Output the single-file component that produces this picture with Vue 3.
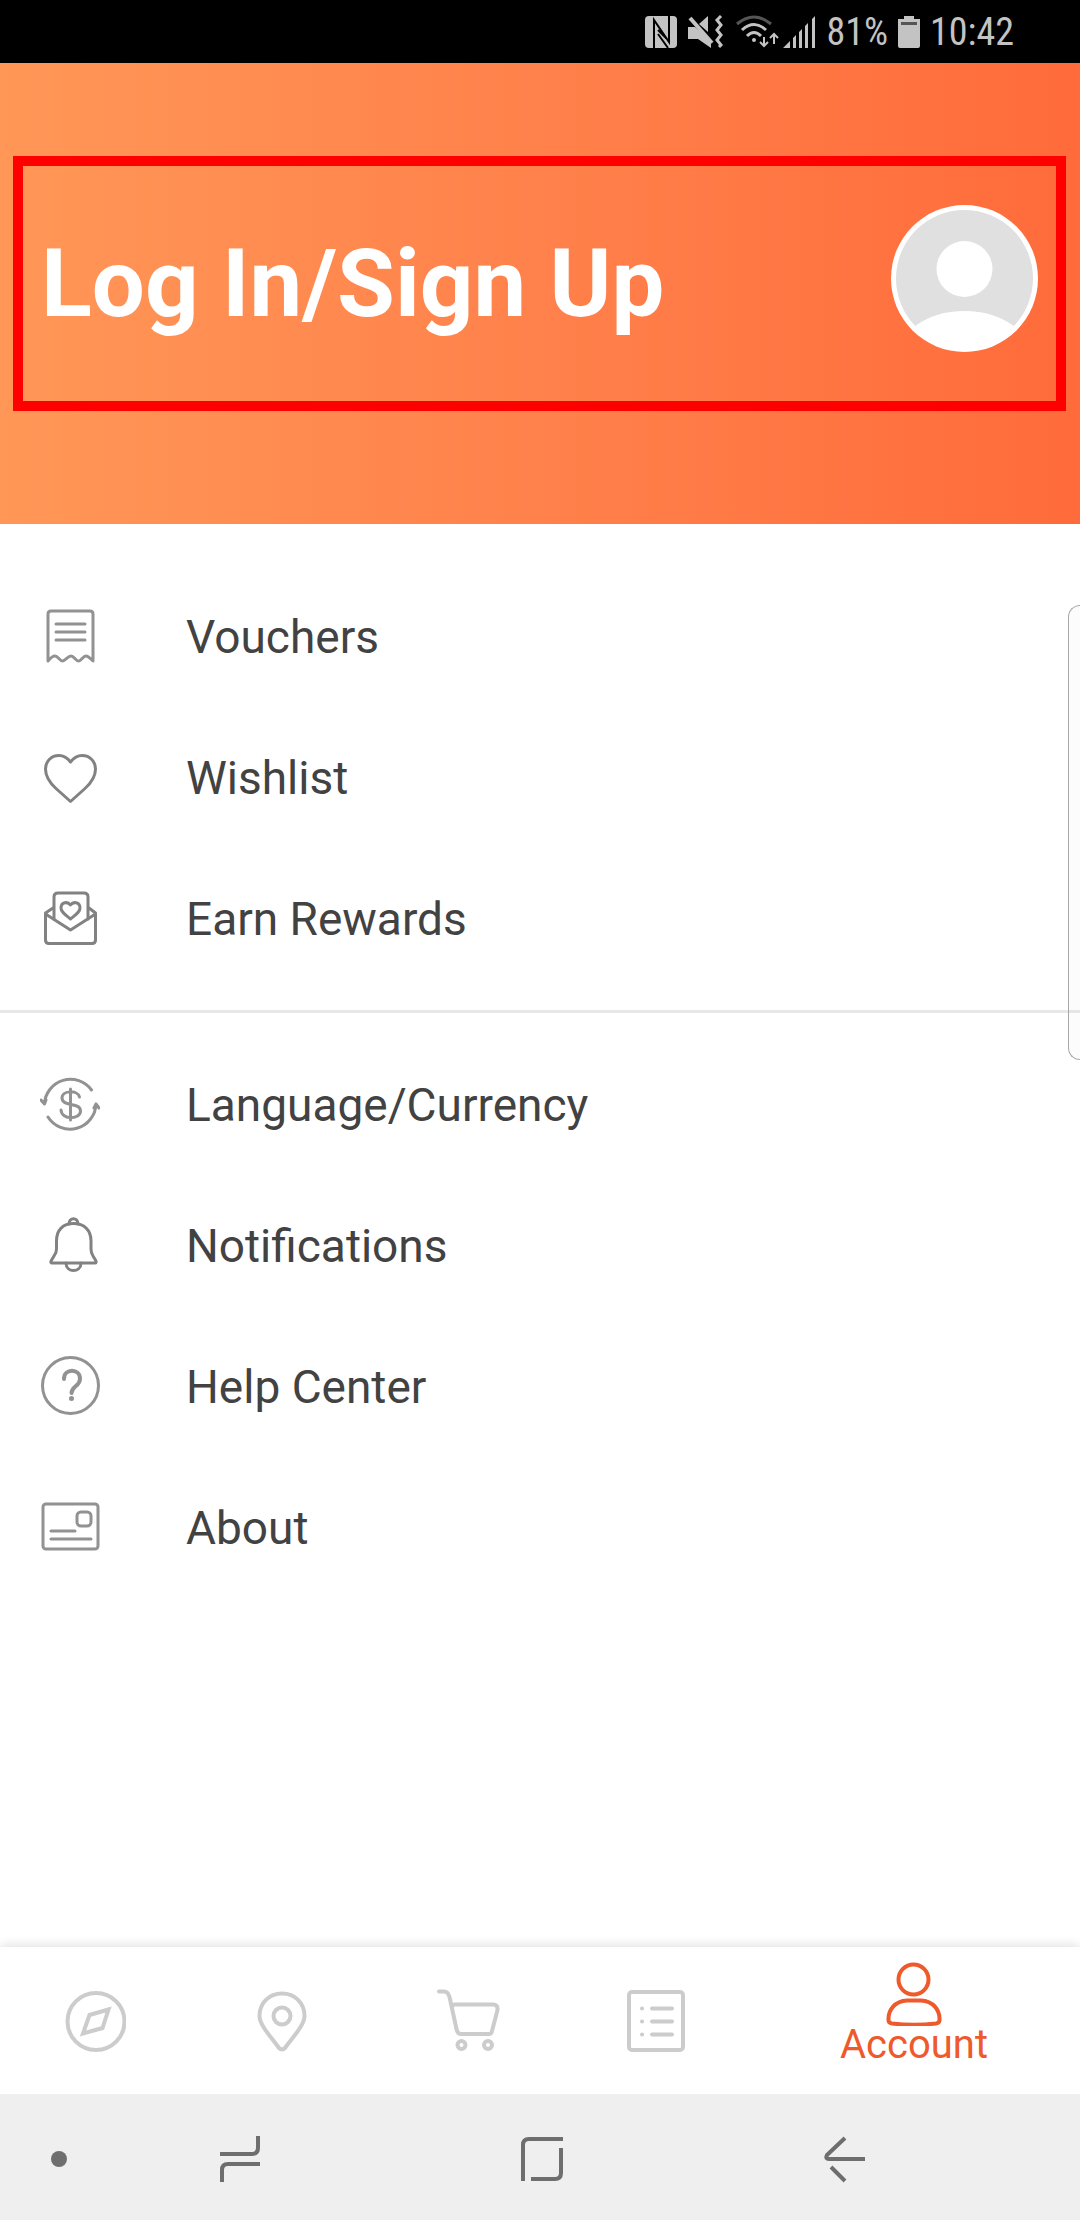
<script setup>
const groups = [
  [
    { icon: 'voucher', label: 'Vouchers' },
    { icon: 'heart', label: 'Wishlist' },
    { icon: 'rewards', label: 'Earn Rewards' },
  ],
  [
    { icon: 'currency', label: 'Language/Currency' },
    { icon: 'bell', label: 'Notifications' },
    { icon: 'help', label: 'Help Center' },
    { icon: 'about', label: 'About' },
  ],
]
</script>

<template>
  <div class="screen">
    <div class="status">
      <svg class="status-icons" width="172" height="34" viewBox="0 0 172 34" aria-hidden="true">
        <rect y="1" width="32" height="32" rx="4" fill="#c3c3c3" />
        <path stroke="#000" stroke-width="2" fill="none" d="M9 34V5L24 27V0M13 15L22 24M13 19L23 33" />
        <path fill="#c3c3c3" d="M43 12H50L66 26V33L53 24H43ZM54 9L63 1V17Z" />
        <path stroke="#c3c3c3" stroke-width="4" fill="none" d="M45 3L67 28" />
        <path stroke="#c3c3c3" stroke-width="3" fill="none" d="M76 1L72 5L76 10L72 15L76 20L72 25L76 30L74 32" />
        <g fill="none" stroke="#c3c3c3" stroke-width="3">
          <path stroke="#555" d="M92 9Q109 -5 126 9" />
          <path d="M97 15Q109 4 121 15M102 21Q109 14 116 21" />
          <path stroke-width="2" d="M119 22V31M115 27L119 31L123 27M129 29V19M125 23L129 19L133 23" />
        </g>
        <circle cx="109" cy="25" r="2" fill="#c3c3c3" />
        <path fill="#c3c3c3" d="M138 33L145 26V33ZM148 23L151 20V33H148ZM154 17L157 14V33H154ZM160 11L163 8V33H160ZM167 4L170 1V33H167Z" />
      </svg>
      <span>81%</span>
      <svg width="22" height="34" viewBox="0 0 22 34" aria-hidden="true">
        <path fill="#c3c3c3" d="M6 1H16V4H22V31Q22 33 20 33H2Q0 33 0 31V4H6Z" />
        <path fill="#555" d="M3 7H19V10H3Z" />
      </svg>
      <span>10:42</span>
    </div>

    <header class="hero">
      <a class="login" href="#login">
        <span class="login-title">Log In/Sign Up</span>
        <svg class="avatar" width="147" height="147" viewBox="0 0 147 147" aria-hidden="true">
          <circle cx="73.5" cy="73.5" r="73.5" fill="#fff" />
          <circle cx="73.5" cy="73.5" r="68.5" fill="#e0e0e0" />
          <circle cx="73.5" cy="64" r="28" fill="#fff" />
          <path fill="#fff" d="M24 121Q45 106 73.5 106T123 121Q103 144 73.5 144T24 121Z" />
        </svg>
      </a>
    </header>

    <main class="content">
      <ul v-for="(group, i) in groups" :key="i" class="group">
        <li v-for="item in group" :key="item.icon">
          <a class="row" :href="'#' + item.icon">
            <svg class="row-icon" width="60" height="60" viewBox="0 0 60 60" aria-hidden="true">
              <g v-if="item.icon === 'voucher'">
                <path d="M8 55V8Q8 5 11 5H50Q53 5 53 8V55Q48 50 46 50C43 50 41 55 38.5 55S34 50 31 50S25 55 22.5 55S18 50 15 50Q12 50 8 55Z" />
                <path d="M16 18H45M16 26H45M16 34H45" />
              </g>
              <g v-else-if="item.icon === 'heart'" class="dark">
                <path d="M30.500 15C27 10.500 23.500 8.500 19 8.500C11 8.500 5.500 14.500 5.500 22C5.500 30 10 36 16 41.500L30.500 54.500L45 41.500C51 36 55.500 30 55.500 22C55.500 14.500 50 8.500 42 8.500C37.500 8.500 34 10.500 30.500 15Z" />
              </g>
              <g v-else-if="item.icon === 'rewards'" class="dark">
                <path d="M14 31V9Q14 5 18 5H44Q48 5 48 9V31" />
                <path d="M13 20L5.500 25V52Q5.500 55.500 9 55.500H52Q55.500 55.500 55.500 52V25L49 20M5.500 26L30.500 42L55.500 26" />
                <path d="M30.500 17C28 13.500 21 13.500 21 20C21 24 25 26.500 30.500 31C36 26.500 40 24 40 20C40 13.500 33 13.500 30.500 17Z" />
              </g>
              <g v-else-if="item.icon === 'currency'">
                <path d="M51.500 16A26 26 0 0 0 4.500 30L1 26M4.500 30L6 26M8 43A26 26 0 0 0 56 30L59 34M56 30L54 34" />
                <path d="M30.500 15V46M39.500 23C38 16 22 16 22 24C22 33 40.500 28 40.500 37C40.500 46 21.500 46 21 36" />
              </g>
              <g v-else-if="item.icon === 'bell'" class="dark">
                <path d="M16.500 26C16.500 15 23 8.500 33.500 8.500S51 15 51 26V34Q51 38 53 41L56 46Q56.500 48 55 48H12Q10.500 48 11 46L14 41Q16.500 38 16.500 34Z" />
                <path d="M29 9C29 2 38 2 38 9M26 48C26 58 41 58 41 48" />
              </g>
              <g v-else-if="item.icon === 'help'">
                <circle cx="30.5" cy="29.5" r="28" />
                <path stroke-width="4" d="M24 23C24 12 40 12 40 23C40 30 32 30 31.500 37" />
                <circle class="solid" cx="31.500" cy="42.500" r="2.500" />
              </g>
              <g v-else>
                <rect x="3" y="7" width="55" height="45" rx="3" />
                <rect x="37" y="15" width="14" height="14" rx="4" />
                <path d="M11 34H35M11 42H51" />
              </g>
            </svg>
            <span class="row-label">{{ item.label }}</span>
          </a>
        </li>
      </ul>
      <div class="edge-panel"></div>
    </main>

    <nav class="tabs" aria-label="Main">
      <a class="tab" href="#explore" aria-label="Explore">
        <svg width="64" height="64" viewBox="0 0 64 64">
          <circle cx="34" cy="32.5" r="28.5" />
          <path stroke-linejoin="miter" d="M46.500 20.500L27.500 26L21 44.500L40.500 39Z" />
        </svg>
      </a>
      <a class="tab" href="#nearby" aria-label="Nearby">
        <svg width="64" height="64" viewBox="0 0 64 64">
          <path d="M33 4.500C20 4.500 10.500 14 10.500 27C10.500 36 22 48 30 59Q33 62 36 59C44 48 55.500 36 55.500 27C55.500 14 46 4.500 33 4.500Z" />
          <circle cx="33" cy="27" r="8.5" />
        </svg>
      </a>
      <a class="tab" href="#cart" aria-label="Cart">
        <svg width="64" height="64" viewBox="0 0 64 64">
          <path d="M3 2.500H8Q12 2.500 13.500 8L20.500 40Q21.500 45 25 45H53Q55.500 45 56 42L61.500 21Q62 15.500 57 15.500H19Q16 15.500 16 18" />
          <circle cx="25.500" cy="56" r="4" />
          <circle cx="52" cy="56" r="4" />
        </svg>
      </a>
      <a class="tab" href="#bookings" aria-label="Bookings">
        <svg width="64" height="64" viewBox="0 0 64 64">
          <rect x="6" y="3" width="54" height="58" rx="3" />
          <path d="M19 19.500H19.100M19 32.500H19.100M19 45.500H19.100M29 19.500H49M29 32.500H49M29 45.500H49" />
        </svg>
      </a>
      <a class="tab active" href="#account" aria-current="page">
        <svg width="64" height="64" viewBox="0 0 64 64">
          <circle cx="31.500" cy="17.500" r="15" />
          <path d="M25 38.500H39C51 39 58 48 57.500 58Q57.500 61 54 61.500Q32 64 10 61.500Q6.500 61 6.500 58C6 48 13 39 25 38.500Z" />
        </svg>
        <span>Account</span>
      </a>
    </nav>

    <div class="system">
      <button type="button" aria-label="Hide bar">
        <svg width="48" height="48" viewBox="0 0 48 48"><circle class="dot" cx="24" cy="24" r="8" /></svg>
      </button>
      <button type="button" aria-label="Recent apps">
        <svg width="48" height="48" viewBox="0 0 48 48"><path d="M42 1V13Q42 19 36 19H4M44 29H12Q6 29 6 35V47" /></svg>
      </button>
      <button type="button" aria-label="Home">
        <svg width="48" height="48" viewBox="0 0 48 48"><path d="M5 46V10Q5 4 11 4H45M43 13V38Q43 44 37 44H13" /></svg>
      </button>
      <button type="button" aria-label="Back">
        <svg width="48" height="48" viewBox="0 0 48 48"><path d="M44 24H8Q4 24 6 20L24 3M10 32L24 46" /></svg>
      </button>
    </div>
  </div>
</template>

<style>
body {
  margin: 0;
}
</style>

<style scoped>
.screen {
  display: flex;
  flex-direction: column;
  min-height: 100vh;
  background: #fff;
  font-family: Roboto, sans-serif;
}
a {
  color: inherit;
  text-decoration: none;
}
svg {
  display: block;
  flex: none;
}
.status {
  display: flex;
  align-items: center;
  justify-content: flex-end;
  gap: 10px;
  height: 63px;
  padding-right: 66px;
  background: #000;
  color: #c3c3c3;
  font-family: "Roboto Condensed", "Liberation Sans Narrow", Roboto, sans-serif;
  font-size: 38px;
}
.hero {
  padding: 93px 14px 113px 13px;
  background: linear-gradient(90deg, #ff9757, #ff814b 50%, #ff6b3b);
}
.login {
  display: flex;
  align-items: center;
  justify-content: space-between;
  padding: 39px 18px;
  border: 10px solid #f00;
  color: #fff;
}
.login-title {
  font-size: 94px;
  font-weight: 700;
  line-height: 108px;
}
.avatar {
  margin-bottom: 10px;
}
.content {
  position: relative;
  flex: 1;
  padding-top: 21px;
}
.group {
  margin: 0;
  padding: 21px 0;
  list-style: none;
}
.group + .group {
  border-top: 3px solid #e8e8e8;
}
.row {
  display: flex;
  align-items: center;
  gap: 86px;
  height: 141px;
  padding-left: 40px;
  color: #424242;
  font-size: 46px;
}
.row-icon {
  margin-bottom: 2px;
  fill: none;
  stroke: #929292;
  stroke-width: 3;
  stroke-linecap: round;
  stroke-linejoin: round;
}
.row-icon .dark {
  stroke: #828282;
}
.row-icon .solid {
  fill: #929292;
  stroke: none;
}
.row-label {
  padding-top: 1px;
}
.edge-panel {
  position: absolute;
  top: 81px;
  right: 0;
  box-sizing: border-box;
  width: 12px;
  height: 455px;
  border: 1px solid #a8a8a8;
  border-right: 0;
  border-radius: 18px 0 0 18px;
  background: rgba(0, 0, 0, 0.01);
}
.tabs {
  display: flex;
  height: 147px;
  background: #fff;
  box-shadow: 0 -2px 10px rgba(0, 0, 0, 0.12);
}
.tab {
  display: flex;
  flex: 187 1 0;
  flex-direction: column;
  align-items: center;
  justify-content: center;
}
.tab svg {
  fill: none;
  stroke: #ccc;
  stroke-width: 4;
  stroke-linecap: round;
  stroke-linejoin: round;
}
.tab.active {
  flex-grow: 332;
  justify-content: flex-start;
  padding-top: 15px;
  color: #ee5a2b;
  font-size: 40px;
  line-height: 38px;
}
.tab.active svg {
  stroke: #ee5a2b;
}
.system {
  position: relative;
  display: grid;
  grid-template-columns: 118fr 244fr 360fr 246fr 112fr;
  height: 126px;
  background: #efefef;
}
.system button {
  display: flex;
  align-items: center;
  justify-content: center;
  padding: 4px 0 0;
  border: 0;
  background: none;
}
.system svg {
  fill: none;
  stroke: #6e6e6e;
  stroke-width: 4;
}
.system .dot {
  fill: #6e6e6e;
  stroke: none;
}
</style>
